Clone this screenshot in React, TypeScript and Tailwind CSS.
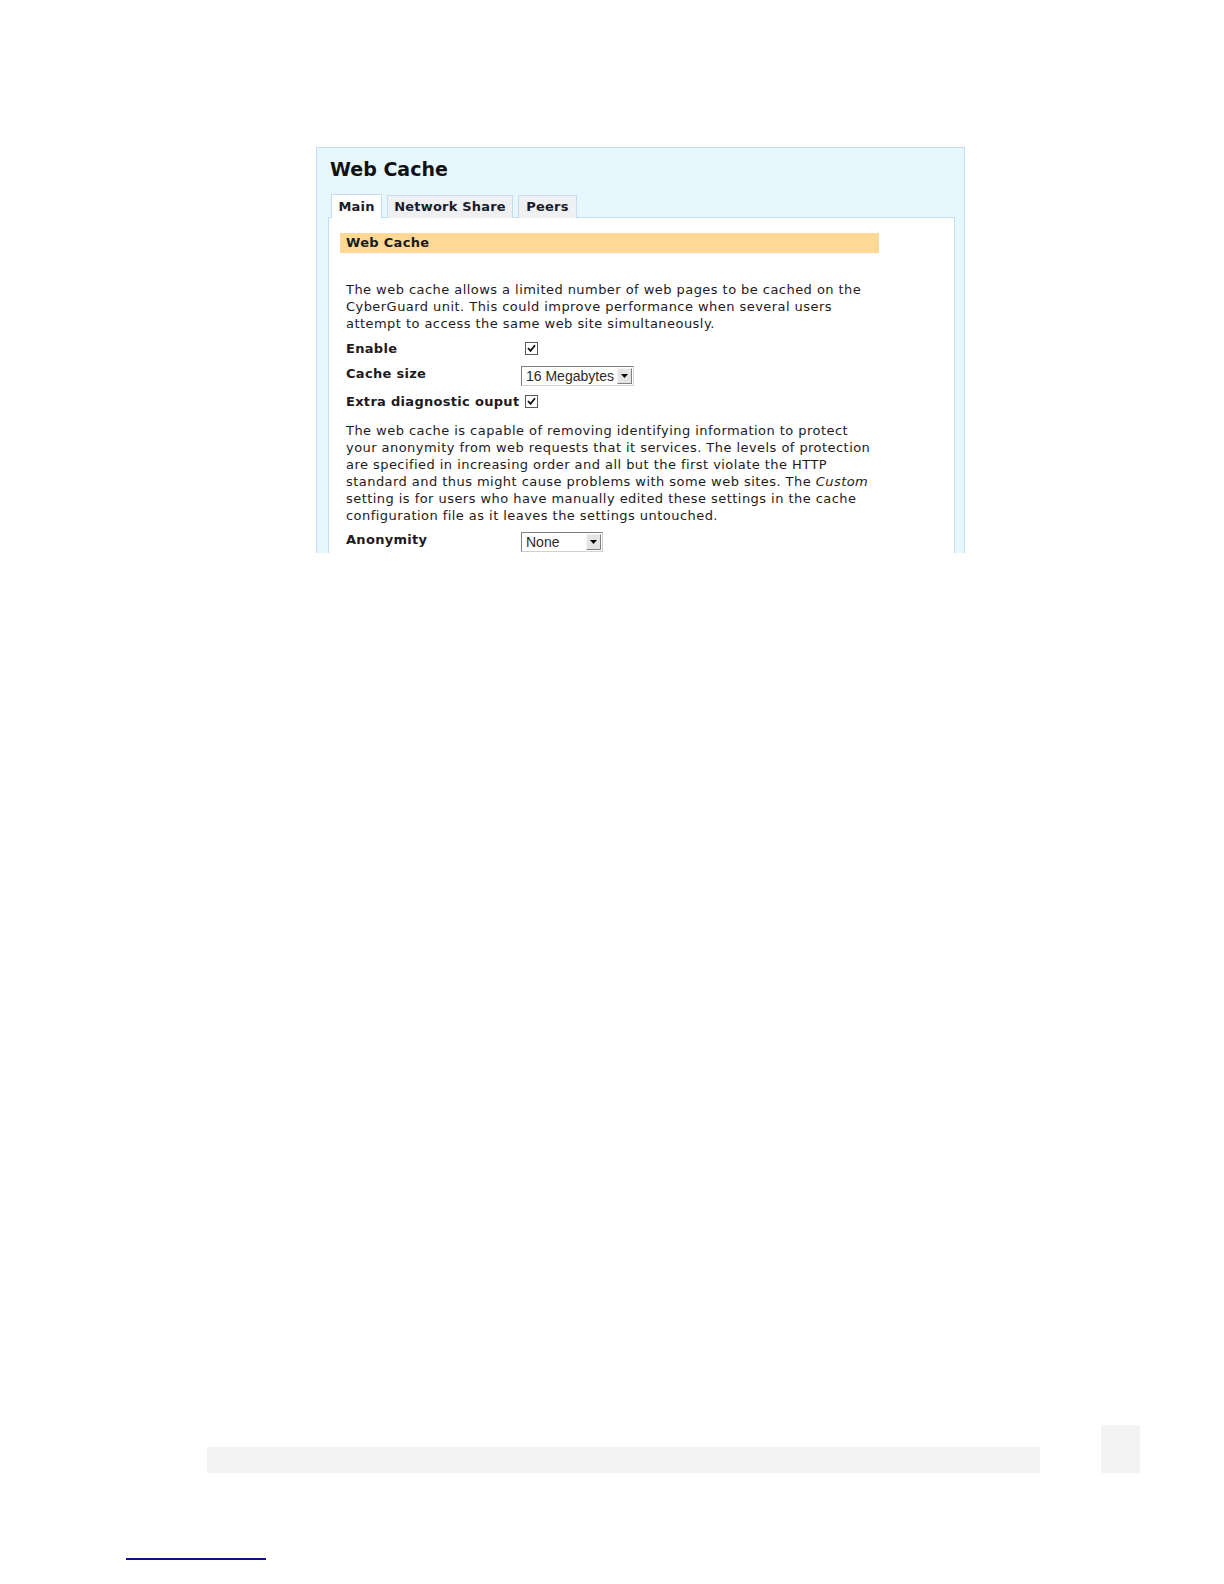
import React from "react";

const font = { fontFamily: '"DejaVu Sans", Verdana, sans-serif' };

function Check() {
  return (
    <span className="inline-flex h-[13px] w-[13px] items-center justify-center border border-[#5a5a5a] bg-white">
      <svg width="9" height="9" viewBox="0 0 9 9">
        <path d="M1 4 L3.5 6.8 L8 1.2" fill="none" stroke="#111" strokeWidth="1.8" />
      </svg>
    </span>
  );
}

function Select({ value, width }: { value: string; width: string }) {
  return (
    <span
      className={`flex h-[20px] ${width} items-stretch border border-[#7f7f7f] border-r-[#d4d0c8] border-b-[#d4d0c8] bg-white`}
    >
      <span
        className="flex flex-1 items-center pl-[4px] text-[14px] leading-none tracking-normal text-[#2a2a2a]"
        style={{ fontFamily: '"Liberation Sans", Arial, sans-serif' }}
      >
        {value}
      </span>
      <span className="my-[1px] mr-[1px] flex w-[15px] items-center justify-center border border-[#f4f4f4] border-r-[#808080] border-b-[#808080] bg-[#e4e4e4]">
        <svg width="7" height="4" viewBox="0 0 7 4">
          <path d="M0 0 H7 L3.5 4 Z" fill="#000" />
        </svg>
      </span>
    </span>
  );
}

export default function App() {
  return (
    <div className="relative h-[1584px] w-[1224px] overflow-hidden bg-white pt-[147px]" style={font}>
      {/* Panel */}
      <div className="ml-[316px] h-[406px] w-[649px] overflow-hidden border border-b-0 border-[#c6dcf0] bg-[#e6f7fe] pl-[11px] pt-[9px]">
        <div className="pl-[2px] text-[19px] font-bold leading-[24px] text-[#111]">Web Cache</div>
        {/* Tabs */}
        <div className="mt-[13px] flex h-[24px] items-end gap-[5px] pl-[3px] text-[13px] font-bold tracking-[0.2px] text-[#1b1b2b]">
          <div className="relative z-10 flex h-[24px] w-[51px] items-center justify-center border border-b-0 border-[#c6dcf0] bg-white">
            Main
          </div>
          <div className="flex h-[23px] w-[126px] items-center justify-center border border-b-0 border-[#c6dcf0] bg-[#eef0f2]">
            Network Share
          </div>
          <div className="flex h-[23px] w-[59px] items-center justify-center border border-b-0 border-[#c6dcf0] bg-[#eef0f2]">
            Peers
          </div>
        </div>
        {/* Content */}
        <div className="-mt-px h-[400px] w-[627px] border border-[#c6dcf0] bg-white pl-[11px] pt-[15px] text-[13px] leading-[17px] text-[#1e1a22]">
          <div className="h-[20px] w-[539px] bg-[#fed996] pl-[6px] font-bold leading-[20px] tracking-[0.3px] text-[#1a1a1a]">
            Web Cache
          </div>
          <div className="pl-[6px]">
            <p className="mt-[28px] whitespace-nowrap tracking-[0.45px]">
              The web cache allows a limited number of web pages to be cached on the
              <br />
              CyberGuard unit. This could improve performance when several users
              <br />
              attempt to access the same web site simultaneously.
            </p>
            <div className="mt-[8px] flex h-[17px] items-center">
              <span className="w-[175px] font-bold tracking-[0.3px]">Enable</span>
              <span className="ml-[4px] flex"><Check /></span>
            </div>
            <div className="mt-[8px] flex h-[21px] items-start">
              <span className="w-[175px] font-bold tracking-[0.3px]">Cache size</span>
              <span className="mt-[1px] flex">
                <Select value="16 Megabytes" width="w-[113px]" />
              </span>
            </div>
            <div className="mt-[7px] flex h-[17px] items-center">
              <span className="w-[179px] whitespace-nowrap font-bold tracking-[0.3px]">Extra diagnostic ouput</span>
              <span className="flex"><Check /></span>
            </div>
            <p className="mt-[12px] whitespace-nowrap tracking-[0.45px]">
              The web cache is capable of removing identifying information to protect
              <br />
              your anonymity from web requests that it services. The levels of protection
              <br />
              are specified in increasing order and all but the first violate the HTTP
              <br />
              standard and thus might cause problems with some web sites. The <i>Custom</i>
              <br />
              setting is for users who have manually edited these settings in the cache
              <br />
              configuration file as it leaves the settings untouched.
            </p>
            <div className="mt-[7px] flex h-[21px] items-start">
              <span className="w-[175px] font-bold tracking-[0.3px]">Anonymity</span>
              <span className="mt-[1px] flex">
                <Select value="None" width="w-[82px]" />
              </span>
            </div>
          </div>
        </div>
      </div>

      {/* Bottom decorations */}
      <div className="ml-[207px] mt-[872px] flex items-end gap-[61px]">
        <div className="h-[26px] w-[833px] bg-[#f3f3f3]" />
        <div className="h-[48px] w-[39px] bg-[#f3f3f3]" />
      </div>
      <div className="ml-[126px] mt-[85px] h-[2px] w-[140px] bg-[#10108a]" />
    </div>
  );
}
